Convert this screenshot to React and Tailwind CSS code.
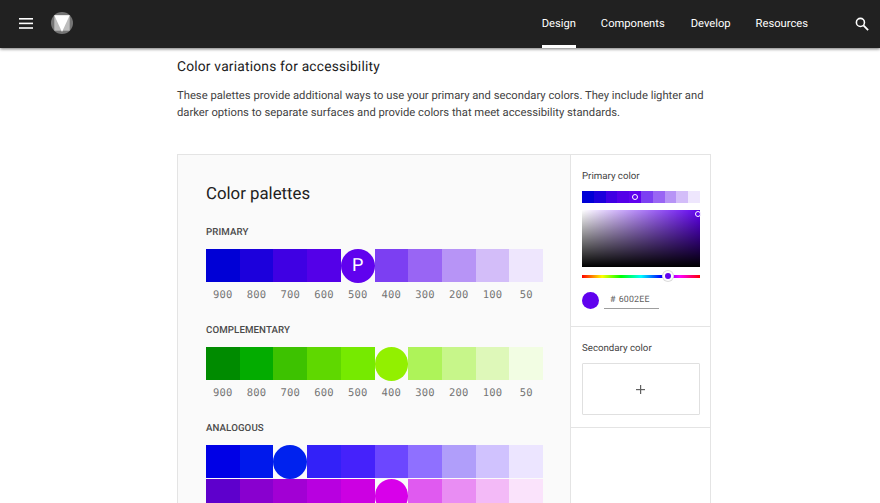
const primary = ["#0000d6","#1c00dc","#3f00e3","#5400e8","#6002ee","#7c3ff2","#9965f4","#b794f6","#d3bdf9","#eee6fd"];
const comp = ["#008b00","#03ac00","#3dc200","#5fd800","#76ea00","#92f000","#aef359","#c7f68a","#def8b9","#f2fde3"];
const ana1 = ["#0000e6","#0019ec","#0022ee","#3321f8","#4522fb","#6c47ff","#8f70ff","#b09efa","#d0c2fe","#ece5ff"];
const ana2 = ["#5e00cc","#8900cf","#a200d4","#b800e0","#cc00e2","#d800ea","#e05af0","#e98df3","#f3baf7","#fae3fb"];
const labels = ["900","800","700","600","500","400","300","200","100","50"];

function Row({ colors, circle, letter }) {
  return (
    <div className="flex h-[33px] w-[337px] shrink-0">
      {colors.map((c, i) => (
        <div key={i} className="flex-1 h-full">
          {i === circle ? (
            <div className="h-[33.7px] w-full rounded-full flex items-center justify-center text-white text-[18px] leading-none font-normal" style={{ backgroundColor: c }}>{letter}</div>
          ) : (
            <div className="h-full w-full" style={{ backgroundColor: c }} />
          )}
        </div>
      ))}
    </div>
  );
}

function Labels() {
  return (
    <div className="flex w-[337px] mt-[7px] h-[13px] items-center">
      {labels.map((l) => (
        <div key={l} className="flex-1 text-center text-[10.5px] leading-[13px] tracking-[0.2px] text-[#757575] font-['DejaVu_Sans_Mono',monospace]">{l}</div>
      ))}
    </div>
  );
}

function Title({ children }) {
  return <div className="text-[9.7px] leading-[14px] font-medium tracking-[0.1px] text-[#4a4a4a]">{children}</div>;
}

export default function App() {
  return (
    <div className="relative h-[503px] w-[880px] overflow-hidden bg-white font-['Roboto',sans-serif] [text-rendering:geometricPrecision]">
      <header className="relative z-10 flex h-[48px] items-center bg-[#212121] shadow-[0_1px_3px_rgba(0,0,0,0.55)]">
        <svg className="ml-[19px] mb-[1px] h-[13px] w-[14px]" viewBox="0 0 14 13" fill="#fff">
          <rect x="0" y="1" width="14" height="1.6" />
          <rect x="0" y="5.6" width="14" height="1.6" />
          <rect x="0" y="10.2" width="14" height="1.6" />
        </svg>
        <svg className="ml-[18px] mb-[2px] h-[22px] w-[22px]" viewBox="0 0 22 22">
          <circle cx="11" cy="11" r="11" fill="#757575" />
          <rect x="3.3" y="3.3" width="15.4" height="15.4" fill="#bdbdbd" />
          <path d="M3.3 3.3 H18.7 L11 20 Z" fill="#fff" />
        </svg>
        <nav className="ml-auto flex h-full text-[11.2px] font-normal text-white">
          <div className="relative flex h-full items-center w-[34px] justify-center">Design
            <div className="absolute bottom-0 left-0 right-0 h-[3px] bg-white" />
          </div>
          <div className="ml-[25px] flex items-center">Components</div>
          <div className="ml-[26px] flex items-center">Develop</div>
          <div className="ml-[25px] flex items-center">Resources</div>
        </nav>
        <svg className="ml-[47px] mr-[11px] mb-[1px] h-[14px] w-[14px]" viewBox="0 0 16 16" fill="none" stroke="#fff">
          <circle cx="6.2" cy="6.2" r="4.6" strokeWidth="1.8" />
          <path d="M9.6 9.6 L15 15" strokeWidth="2.1" />
        </svg>
      </header>

      <main className="ml-[177px] w-[534px]">
        <h2 className="mt-[10px] text-[13.8px] leading-[18px] tracking-[0.2px] text-[#212121] font-normal">Color variations for accessibility</h2>
        <p className="mt-[11px] text-[11.24px] leading-[17px] text-[#424242]">
          These palettes provide additional ways to use your primary and secondary colors. They include lighter and darker options to separate surfaces and provide colors that meet accessibility standards.
        </p>

        <div className="mt-[33px] flex h-[400px] w-[534px] border border-[#e4e4e4] border-b-0">
          <section className="w-[392px] shrink-0 bg-[#fafafa] pl-[28px]">
            <h3 className="mt-[28px] text-[16.8px] leading-[22px] font-normal text-[#212121]">Color palettes</h3>
            <div className="mt-[21px]"><Title>PRIMARY</Title></div>
            <div className="mt-[9px]"><Row colors={primary} circle={4} letter="P" /></div>
            <Labels />
            <div className="mt-[22px]"><Title>COMPLEMENTARY</Title></div>
            <div className="mt-[9px]"><Row colors={comp} circle={5} /></div>
            <Labels />
            <div className="mt-[22px]"><Title>ANALOGOUS</Title></div>
            <div className="mt-[9px]"><Row colors={ana1} circle={2} /></div>
            <div className="mt-[1px]"><Row colors={ana2} circle={5} /></div>
          </section>

          <aside className="min-w-0 flex-1 border-l border-[#e4e4e4] bg-white">
            <div className="h-[172px] border-b border-[#e4e4e4] pl-[11px] pr-[10px] pt-[15px]">
              <div className="text-[9.7px] leading-[14px] text-[#424242]">Primary color</div>
              <div className="relative mt-[7px] flex h-[12px] w-[118px]">
                {primary.map((c) => <div key={c} className="flex-1" style={{ backgroundColor: c }} />)}
                <div className="absolute left-[50px] top-[3px] h-[6px] w-[6px] rounded-full border-[1.5px] border-white bg-[#6002ee]" />
              </div>
              <div className="relative mt-[7px] h-[57px] w-[118px] bg-[#6002ee]">
                <div className="absolute inset-0 bg-gradient-to-r from-white to-transparent" />
                <div className="absolute inset-0 bg-gradient-to-b from-transparent to-black" />
                <div className="absolute right-[-1px] top-[1px] h-[6px] w-[6px] rounded-full border-[1.5px] border-white bg-[#6002ee]" />
              </div>
              <div className="relative mt-[8px] h-[3px] w-[118px] bg-[linear-gradient(to_right,#f00_0%,#ff0_17%,#0f0_33%,#0ff_50%,#00f_67%,#f0f_83%,#f00_100%)]">
                <div className="absolute left-[83px] top-[-2px] h-[6px] w-[6px] rounded-full bg-[#6002ee] shadow-[0_0_0_2px_rgba(255,255,255,0.9),0_0_0_3px_#ddd]" />
              </div>
              <div className="mt-[14px] flex items-center">
                <div className="h-[17px] w-[17px] rounded-full bg-[#6002ee]" />
                <div className="ml-[5px] flex h-[17px] w-[55px] gap-[3px] whitespace-nowrap border-b border-[#9e9e9e] pl-[6px] text-[8.8px] leading-[17px] tracking-[0.2px] text-[#616161]">
                  <span>#</span><span>6002EE</span>
                </div>
              </div>
            </div>
            <div className="h-[101px] border-b border-[#e4e4e4] pl-[11px] pr-[10px] pt-[15px]">
              <div className="text-[9.7px] leading-[14px] text-[#424242]">Secondary color</div>
              <div className="mt-[7px] flex h-[52px] w-[118px] items-center justify-center rounded-[1px] border border-[#e0e0e0] pr-[1px]">
                <svg className="h-[9px] w-[9px]" viewBox="0 0 9 9" fill="#616161">
                  <rect x="4" y="0" width="1.2" height="9" />
                  <rect x="0" y="4" width="9" height="1.2" />
                </svg>
              </div>
            </div>
          </aside>
        </div>
      </main>
    </div>
  );
}
